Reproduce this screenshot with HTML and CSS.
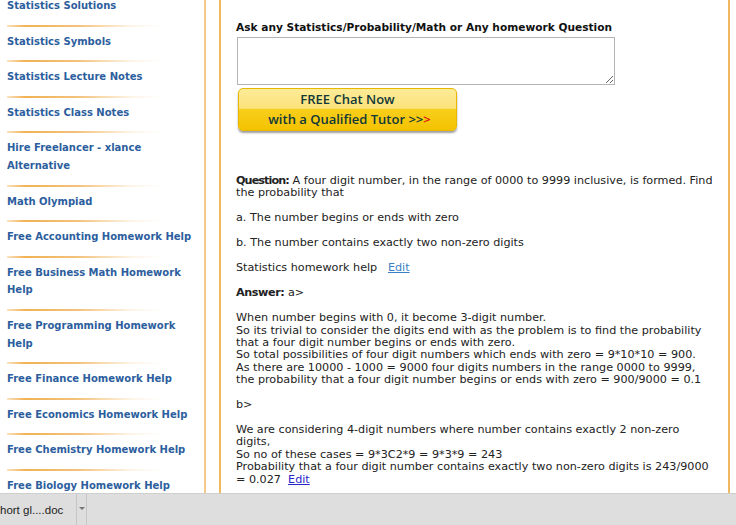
FILE: index.html
```html
<!DOCTYPE html>
<html lang="en">
<head>
  <meta charset="UTF-8">
  <title>Statistics Homework Help</title>
  <link rel="stylesheet" href="styles.css">
</head>
<body>
  <div class="site">
    <div class="sidebar">
      <ul class="side-links">
        <li><a href="#">Statistics Solutions</a></li>
        <li><a href="#">Statistics Symbols</a></li>
        <li><a href="#">Statistics Lecture Notes</a></li>
        <li><a href="#">Statistics Class Notes</a></li>
        <li><a href="#">Hire Freelancer - xlance Alternative</a></li>
        <li><a href="#">Math Olympiad</a></li>
        <li><a href="#">Free Accounting Homework Help</a></li>
        <li><a href="#">Free Business Math Homework Help</a></li>
        <li><a href="#">Free Programming Homework Help</a></li>
        <li><a href="#">Free Finance Homework Help</a></li>
        <li><a href="#">Free Economics Homework Help</a></li>
        <li><a href="#">Free Chemistry Homework Help</a></li>
        <li><a href="#">Free Biology Homework Help</a></li>
      </ul>
    </div>

    <div class="main">
      <div class="ask-title">Ask any Statistics/Probability/Math or Any homework Question</div>
      <textarea class="ask-box"></textarea>
      <a href="#" class="chat-btn">
        <span class="chat-top">FREE Chat Now</span>
        <span class="chat-bottom">with a Qualified Tutor &gt;&gt;<span class="red">&gt;</span></span>
      </a>

      <p class="first"><b class="tighter">Question:</b> A four digit number, in the range of 0000 to 9999 inclusive, is formed. Find the probability that</p>
      <p>a. The number begins or ends with zero</p>
      <p>b. The number contains exactly two non-zero digits</p>
      <p>Statistics homework help &nbsp; <a href="#" class="edit">Edit</a></p>
      <p><b class="tight">Answer:</b> a&gt;<br><br>
        When number begins with 0, it become 3-digit number.<br>
        So its trivial to consider the digits end with as the problem is to find the probability that a four digit number begins or ends with zero.<br>
        So total possibilities of four digit numbers which ends with zero = 9*10*10 = 900.<br>
        As there are 10000 - 1000 = 9000 four digits numbers in the range 0000 to 9999,<br>
        the probability that a four digit number begins or ends with zero = 900/9000 = 0.1<br><br>
        b&gt;<br><br>
        We are considering 4-digit numbers where number contains exactly 2 non-zero digits,<br>
        So no of these cases = 9*3C2*9 = 9*3*9 = 243<br>
        Probability that a four digit number contains exactly two non-zero digits is 243/9000 = 0.027 &nbsp;<a href="#" class="edit visited">Edit</a>
      </p>
    </div>
  </div>

  <div class="downloads">
    <div class="dl-item">hort gl....doc</div>
    <div class="dl-arrow"><span class="tri"></span></div>
  </div>
</body>
</html>
```

FILE: styles.css
```css
body {
  margin: 0;
  height: 525px;
  overflow: hidden;
  background: #fff;
  font-family: "DejaVu Sans", Verdana, sans-serif;
  color: #222;
}

.site {
  display: flex;
  height: 493px;
  overflow: hidden;
  align-items: flex-start;
}

/* left menu */
.sidebar {
  width: 204px;
  min-height: 493px;
  border-right: 2px solid #f5c98c;
  flex-shrink: 0;
}
.side-links {
  list-style: none;
  margin: -9px 0 0;
  padding: 0 0 0 7px;
}
.side-links li {
  padding: 6px 0 12px;
  font-size: 10px;
  line-height: 17.6px;
  background: linear-gradient(to right, rgba(240,170,70,0.3), #f0b355 12%, #f3c17a 45%, rgba(252,236,212,0.6) 80%, rgba(255,255,255,0)) no-repeat -1px bottom / 156px 2px;
}
.side-links a {
  font-weight: bold;
  color: #2c5e9e;
  text-decoration: none;
}

/* main content */
.main {
  margin-left: 13px;
  width: 478px;
  min-height: 493px;
  padding: 20px 14px 0 15px;
  border-left: 2px solid #f0b860;
  border-right: 2px solid #f0b860;
  font-size: 11.2px;
  line-height: 12.4px;
}
.ask-title {
  font-weight: bold;
  font-size: 10.6px;
  line-height: 14px;
  color: #111;
}
.ask-box {
  display: block;
  box-sizing: border-box;
  width: 378px;
  height: 48px;
  margin: 3px 0 0 1px;
  border: 1px solid #b4b4b4;
  resize: both;
}
.chat-btn {
  display: flex;
  flex-direction: column;
  box-sizing: border-box;
  width: 219px;
  height: 43px;
  margin: 3px 0 0 2px;
  border: 1px solid #e8b800;
  border-radius: 5px;
  background: linear-gradient(#fdeb98 0%, #fbe27a 47%, #f8cf1c 50%, #f4c200 100%);
  box-shadow: 0 2px 2px rgba(80,80,80,0.55);
  text-decoration: none;
  color: #12383a;
  font-family: "Open Sans", "DejaVu Sans", sans-serif;
  font-weight: 600;
  font-size: 13px;
  line-height: 20px;
  text-align: center;
}
.chat-bottom {
  padding-left: 4px;
}
.red {
  color: #e01010;
}

.main p {
  margin: 12.6px 0;
}
.main p.first {
  margin-top: 44px;
}
.tight {
  letter-spacing: -0.4px;
}
.tighter {
  letter-spacing: -0.9px;
}
.edit {
  color: #3b7fc4;
}
.edit.visited {
  color: #2626c8;
}

/* download shelf */
.downloads {
  display: flex;
  height: 31px;
  border-top: 1px solid #cfcfcf;
  background: #dedede;
  font-family: "Liberation Sans", Arial, sans-serif;
  font-size: 11.5px;
  color: #222;
}
.dl-item {
  width: 77px;
  box-sizing: border-box;
  padding-top: 2px;
  border-right: 1px solid #c6c6c6;
  line-height: 29px;
}
.dl-arrow {
  width: 10px;
  border-right: 1px solid #c6c6c6;
  display: flex;
  justify-content: center;
  padding-top: 13px;
  box-sizing: border-box;
}
.tri {
  width: 0;
  height: 0;
  border-left: 3px solid transparent;
  border-right: 3px solid transparent;
  border-top: 3px solid #777;
}
```
